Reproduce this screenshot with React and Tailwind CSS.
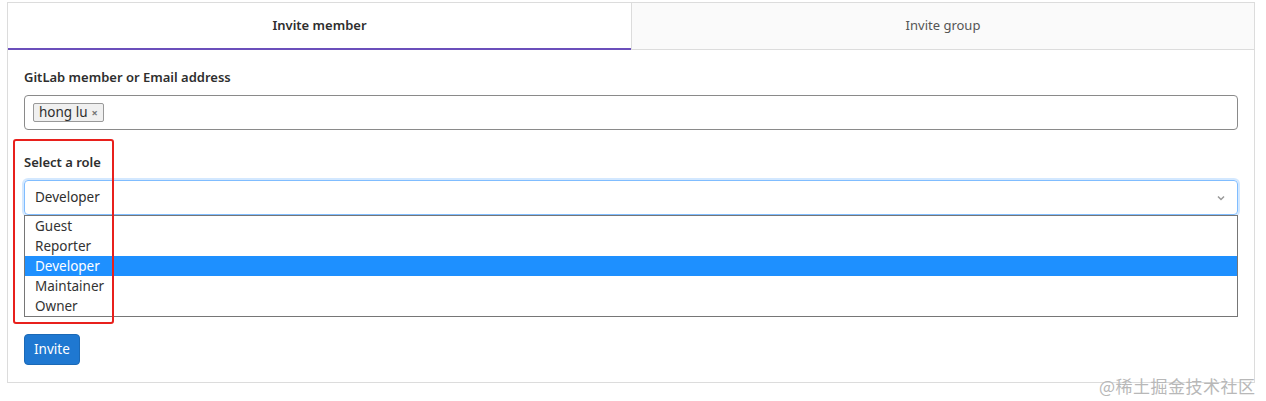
import React from 'react';

const roles = ['Guest', 'Reporter', 'Developer', 'Maintainer', 'Owner'];

export default function App() {
    const font = { fontFamily: '"Noto Sans", "Open Sans", sans-serif' };
    return (
        <div className="relative w-[1266px] h-[401px] bg-white text-[#2e2e2e]" style={font}>
            <div className="absolute left-[7px] top-[2px] w-[1248px] h-[381px] border border-[#dcdcdc] flex flex-col">
                {/* tabs */}
                <div className="flex h-[47px] shrink-0">
                    <div className="w-[623px] flex items-center justify-center bg-white border-b-2 border-[#6b4fbb] text-[13px] font-semibold text-[#2e2e2e]">
                        Invite member
                    </div>
                    <div className="flex-1 flex items-center justify-center bg-[#fafafa] border-l border-b border-[#dcdcdc] text-[13px] text-[#555]">
                        Invite group
                    </div>
                </div>

                <div className="px-4 pt-[18px]">
                    <div className="text-[13px] font-semibold leading-[18px]">GitLab member or Email address</div>
                    <div className="mt-[9px] h-[35px] border border-[#8a8a8a] rounded-[4px] flex items-center px-[8px]">
                        <span className="h-[19px] flex items-center gap-[4px] px-[5px] bg-[#f0f0f0] border border-[#999] rounded-[2px] text-[13.5px] leading-none">
                            hong lu
                            <span className="text-[11px] text-[#777] font-bold">×</span>
                        </span>
                    </div>

                    <div className="mt-[23px] text-[13px] font-semibold leading-[18px]">Select a role</div>
                    <div className="mt-[9px] h-[35px] border border-[#80bdff] rounded-[4px] shadow-[0_0_0_2px_rgba(128,189,255,0.35)] flex items-center justify-between pl-[10px] pr-[10px] text-[13.5px]">
                        <span>Developer</span>
                        <svg width="12" height="12" viewBox="0 0 12 12" fill="none">
                            <path d="M3 4.5 L6 7.5 L9 4.5" stroke="#999" strokeWidth="1.5" />
                        </svg>
                    </div>
                    <div className="h-[102px] border border-[#767676] bg-white flex flex-col">
                        {roles.map(r => (
                            <div
                                key={r}
                                className={r === 'Developer'
                                    ? 'h-[20px] leading-[20px] px-[10px] text-[13.5px] bg-[#1e90ff] text-white'
                                    : 'h-[20px] leading-[20px] px-[10px] text-[13.5px] text-[#333]'}
                            >
                                {r}
                            </div>
                        ))}
                    </div>

                    <button className="mt-[17px] h-[31px] px-[9px] bg-[#1f78d1] border border-[#1b69b6] rounded-[4px] text-white text-[13.5px]">
                        Invite
                    </button>
                </div>
            </div>

            {/* annotation */}
            <div className="absolute left-[13px] top-[139px] w-[101px] h-[185px] border-2 border-[#e8201c] rounded-[3px]" />

            <div className="absolute left-[1099px] top-[373px] text-[17px] text-[#b8b8b8] tracking-[0.5px]" style={{ fontFamily: '"Noto Sans CJK SC", sans-serif' }}>
                @稀土掘金技术社区
            </div>
        </div>
    );
}
